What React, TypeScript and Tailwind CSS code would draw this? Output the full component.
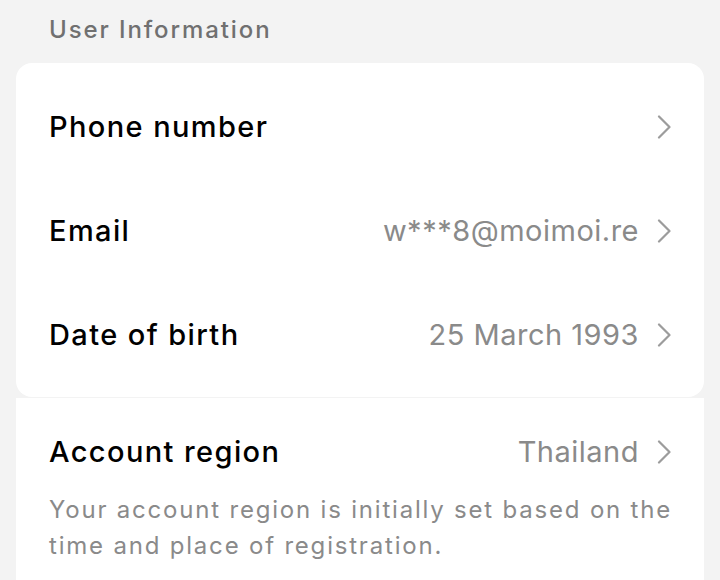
type Row = { label: string; value?: string };

const rows: Row[] = [
  { label: "Phone number" },
  { label: "Email", value: "w***8@moimoi.re" },
  { label: "Date of birth", value: "25 March 1993" },
];

function Chevron() {
  return (
    <svg width="14" height="24" viewBox="0 0 14 24" fill="none" className="shrink-0">
      <polyline
        points="2,1.5 12.5,12 2,22.5"
        stroke="#9c9c9c"
        strokeWidth="2.2"
        strokeLinecap="round"
        strokeLinejoin="round"
      />
    </svg>
  );
}

function InfoRow({ label, value }: Row) {
  return (
    <div className="flex h-[104px] items-center justify-between pl-[33px] pr-[33px]">
      <span className="text-[29px] font-medium tracking-[1.4px] text-black">{label}</span>
      <div className="flex items-center gap-[18px]">
        {value && <span className="text-[29px] tracking-[0.5px] text-[#8a8a8a]">{value}</span>}
        <Chevron />
      </div>
    </div>
  );
}

export default function App() {
  return (
    <div
      className="min-h-[580px] bg-[#f3f3f3] px-4"
      style={{ fontFamily: "Inter, 'Noto Sans', sans-serif" }}
    >
      <div className="pl-[33px] pt-[12px] pb-[16px] text-[24px] font-medium leading-[35px] tracking-[1.9px] text-[#707070]">
        User Information
      </div>
      <div className="rounded-2xl bg-white pt-[12px] pb-[10px]">
        {rows.map((r) => (
          <InfoRow key={r.label} {...r} />
        ))}
      </div>
      <div className="mt-px bg-white pt-[2px] pb-6">
        <InfoRow label="Account region" value="Thailand" />
        <p className="-mt-[12px] pl-[33px] pr-[30px] text-[24px] leading-[36px] tracking-[1.8px] text-[#8a8a8a]">
          Your account region is initially set based on the time and place of registration.
        </p>
      </div>
    </div>
  );
}
